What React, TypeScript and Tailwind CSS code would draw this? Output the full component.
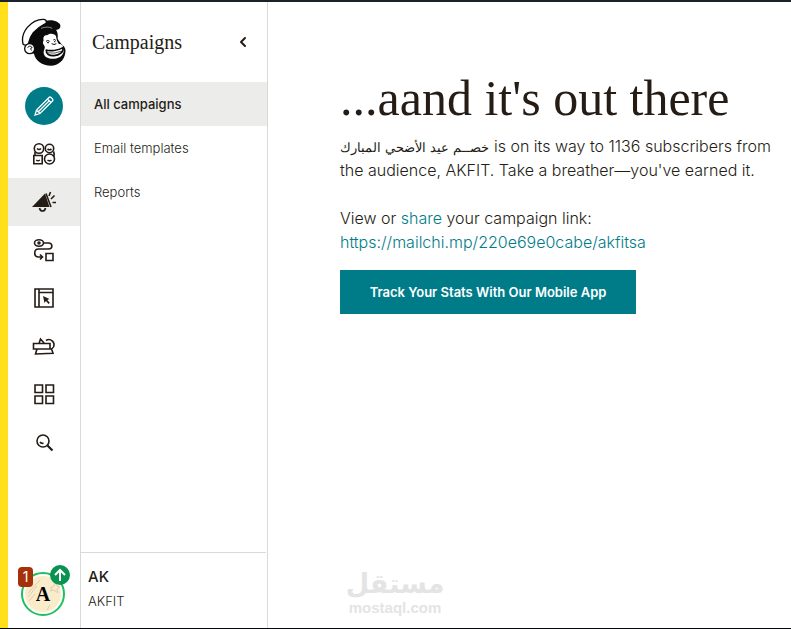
import React from "react";
import { ChevronLeft } from "lucide-react";

const sans = "font-['Inter','DejaVu_Sans',sans-serif]";
const serif = "font-['Liberation_Serif',serif]";

function Logo() {
  return (
    <svg viewBox="64 54 138 144" className="h-12 w-[46px]" aria-hidden="true">
      <path d="M94 104 C108 84 134 76 158 82 L170 91 C174 97 175 106 174 116 C178 124 184 130 189 136 C196 141 199 150 197 158 C194 181 176 196 154 197 C127 197 107 181 103 161 L88 158 L84 130 Z" fill="#0b0b0b" />
      <path d="M137 64 C151 57 174 62 181 73 C185 83 178 91 166 90 C145 82 119 84 96 106 C102 84 121 71 137 64 Z" fill="#0b0b0b" />
      <path d="M70 132 C66 115 70 98 83 82 C97 66 117 57 133 58 C139 59 141 63 140 69 C124 77 111 87 101 98 C92 109 88 122 86 132 C80 136 74 136 70 132 Z" fill="#fff" stroke="#0b0b0b" strokeWidth="4" />
      <path d="M124 85 C137 80 148 80 158 85" fill="none" stroke="#fff" strokeWidth="1.500" />
      <circle cx="90" cy="146" r="15" fill="#fff" stroke="#0b0b0b" strokeWidth="4" />
      <path d="M84 143 C87 136 97 138 97 144 C93 143 91 148 96 151" fill="none" stroke="#0b0b0b" strokeWidth="3" />
      <path d="M132 121 C129 111 135 104 142 106 C148 99 163 99 169 108 C170 119 174 128 178 132 C187 132 192 138 190 145 C196 148 192 164 181 171 C162 181 137 177 133 163 C129 151 139 144 134 137 C129 132 129 126 132 121 Z" fill="#fff" />
      <path d="M139 124 Q144 119 150 124 M161 120 Q166 115 168 122 M156 131 Q163 136 170 131" fill="none" stroke="#0b0b0b" strokeWidth="3" />
      <path d="M142 128h6M163 125h4" fill="none" stroke="#0b0b0b" strokeWidth="3" />
      <path d="M138 150 C151 154 176 152 190 143 C193 156 179 166 163 167 C149 168 139 162 140 151 Z" fill="#fff" stroke="#0b0b0b" strokeWidth="5" />
      <path d="M143 158 Q163 163 184 154" fill="none" stroke="#0b0b0b" strokeWidth="2" />
    </svg>
  );
}

function Icon({ children }: { children: React.ReactNode }) {
  return (
    <svg viewBox="0 0 24 24" className="size-6" fill="none" stroke="#241c15" strokeWidth="1.6" aria-hidden="true">
      {children}
    </svg>
  );
}

const railItems = [
  {
    label: "Audience",
    icon: (
      <Icon>
        <circle cx="7" cy="6.500" r="4.700" />
        <circle cx="17.500" cy="6.500" r="4.200" />
        <path d="M1.800 13.500h8.400v8.200H1.800zM3 10v3.500M21.500 9.500c.8 1.500.8 3.500.3 5" />
        <circle cx="17.500" cy="17" r="5" />
        <path d="M5 6.500q2 2 4 0M15.500 7q2 1.500 4 0M4.300 18q1.700 1.500 3.500 0M15.500 18q2 1.700 4 0" />
      </Icon>
    ),
  },
  {
    label: "Campaigns",
    active: true,
    icon: (
      <Icon>
        <path d="M0 17 13 3.500 17.500 17z" fill="#241c15" stroke="none" />
        <path d="M14 3.500 19 17M17 6l1.500-4M19 9l3.500-3.500M20.500 12.500H24" />
        <path d="M7.500 18q.500 3 3 3t3-3" />
      </Icon>
    ),
  },
  {
    label: "Automations",
    icon: (
      <Icon>
        <ellipse cx="7" cy="5" rx="4.500" ry="3.200" />
        <circle cx="7" cy="5" r="1" />
        <path d="M12 5h4.500c4.500 0 4.500 6 0 6H6.500c-5 0-5 8 0 8h4M8 16.500l2.500 2.500L8 21.500M14 15.500h7V22.500h-7z" />
      </Icon>
    ),
  },
  {
    label: "Website",
    icon: (
      <Icon>
        <path d="M3 3h18v18H3zM7 3v18M7 6.500h14" />
        <path d="m11 10 1.500 7 1.500-2 2.500 3 1.300-1.200-2.500-2.800 2.200-1z" fill="#241c15" stroke="none" />
      </Icon>
    ),
  },
  {
    label: "Content studio",
    icon: (
      <Icon>
        <path d="M1.500 9.500h16.500v5.500H1.500zM5 15l-1.500 5 17.500-.8-1.500-4.200M7 9.500 8.500 5l4 4.500M14 6.500c4.500-3 9.500 2 7.500 6.500q-1 2-3.500 2" />
      </Icon>
    ),
  },
  {
    label: "Integrations",
    icon: (
      <Icon>
        <path d="M3 3h7.500v7.500H3zM14 3h7.500v7.500H14zM3 14h7.500v7.500H3zM14 14h7.500v7.500H14z" />
      </Icon>
    ),
  },
  {
    label: "Search",
    icon: (
      <Icon>
        <circle cx="11" cy="11" r="6" />
        <path d="m15.500 15.500 5 5" strokeWidth="2.200" />
        <path d="M8 12q1 1.700 3.500 1.300" />
      </Icon>
    ),
  },
];

const links = ["All campaigns", "Email templates", "Reports"];

export default function App() {
  return (
    <div className={`flex min-h-screen border-t-2 border-b border-t-[#18222d] border-b-[#05090d] bg-white text-[#241c15] ${sans}`}>
      <nav aria-label="Main" className="flex w-[81px] shrink-0 flex-col border-r border-l-8 border-r-[#dbd9d8] border-l-[#ffe01b]">
        <a href="#home" aria-label="Home" className="flex h-20 items-center justify-center">
          <Logo />
        </a>
        <button type="button" aria-label="Create" className="flex h-12 items-center justify-center">
          <span className="flex size-[38px] items-center justify-center rounded-full bg-[#007c89]">
            <svg viewBox="0 0 24 24" className="size-6" fill="none" stroke="#fff" strokeWidth="1.300" aria-hidden="true">
              <path d="m3 21 1.500-5L17 3.500q1-1 2 0L20.500 5q1 1 0 2L8 19.500zM4.500 16 8 19.500M15.500 5l3.500 3.500M6.300 17.800 17 7" />
            </svg>
          </span>
        </button>
        {railItems.map((item) => (
          <button
            key={item.label}
            type="button"
            aria-label={item.label}
            className={`flex h-12 items-center justify-center ${item.active ? "bg-[#ececeb]" : ""}`}
          >
            {item.icon}
          </button>
        ))}
        <button type="button" aria-label="Account" className="relative mt-auto mb-3 ml-[13px] size-11 rounded-full border-2 border-[#1fbf5c] bg-white p-0.5">
          <span className={`flex size-full items-center justify-center rounded-full bg-[#faecca] text-xl font-bold text-black ${serif}`}>A</span>
          <svg viewBox="0 0 40 40" className="absolute inset-0 size-full" fill="none" stroke="#dccfae" strokeWidth="1" aria-hidden="true">
            <path d="m5 19 12-13M5 23 14 12M6 27l6-7M27 14l4-2 1-4 2 4 3 1-3 2 1 4-4-3-4 1 2-3M24 36l3-5" />
          </svg>
          <span className="absolute -top-[7px] -left-[5px] flex h-5 w-[15px] items-center justify-center rounded-sm bg-[#a63009] text-sm text-white">1</span>
          <span className="absolute -top-[9px] -right-[7px] flex size-5 items-center justify-center rounded-full bg-[#099250]">
            <svg viewBox="0 0 20 20" className="size-5" fill="none" stroke="#fff" strokeWidth="2" aria-hidden="true">
              <path d="M10 16V5M5 10l5-5 5 5" />
            </svg>
          </span>
        </button>
      </nav>

      <aside className="flex w-[187px] shrink-0 flex-col border-r border-[#dbd9d8]">
        <div className="flex h-20 items-center justify-between pr-4 pl-[11px]">
          <h2 className={`text-xl ${serif}`}>Campaigns</h2>
          <button type="button" aria-label="Collapse">
            <ChevronLeft className="size-4" strokeWidth={3} />
          </button>
        </div>
        <ul>
          {links.map((label, i) => (
            <li key={label}>
              <a
                href="#campaigns"
                className={`flex h-11 items-center px-[13px] pt-0.5 text-[13px] ${i === 0 ? "bg-[#ececeb] font-medium" : "font-light"}`}
              >
                {label}
              </a>
            </li>
          ))}
        </ul>
        <div className="mt-auto mr-px border-t border-[#dbd9d8] px-[7px] pt-3 pb-[15px]">
          <p className="text-[15px] leading-6 font-medium">AK</p>
          <p className="text-[13px] leading-6 font-light">AKFIT</p>
        </div>
      </aside>

      <main className="flex min-w-0 flex-1 flex-col pt-[68px] pr-4 pl-[72px]">
        <h1 className={`text-[50px] leading-[56px] ${serif}`}>...aand it's out there</h1>
        <p className="mt-2 text-base leading-6 font-light">
          <bdi lang="ar" className="font-['DejaVu_Sans',sans-serif] text-[13px] leading-none">خصــم عيد الأضحي المبارك</bdi> is on its way to 1136 subscribers from the audience, AKFIT. Take a breather—you've earned it.
        </p>
        <p className="mt-6 text-base leading-6 font-light">
          View or <a href="#share" className="text-[#007c89]">share</a> your campaign link:
          <br />
          <a href="#campaign" className="text-[#007c89]">https://mailchi.mp/220e69e0cabe/akfitsa</a>
        </p>
        <button type="button" className="mt-4 h-11 w-[296px] bg-[#007c89] pt-0.5 text-[13px] font-semibold text-white">
          Track Your Stats With Our Mobile App
        </button>
        <div className="mt-auto mb-3 ml-[7px] flex w-24 flex-col items-center text-[#e4e4e4]">
          <span lang="ar" dir="rtl" className="font-['DejaVu_Sans',sans-serif] text-[27px] leading-8 font-bold">مستقل</span>
          <span className="font-['Liberation_Sans',sans-serif] text-[15px] leading-4 font-bold">mostaql.com</span>
        </div>
      </main>
    </div>
  );
}
